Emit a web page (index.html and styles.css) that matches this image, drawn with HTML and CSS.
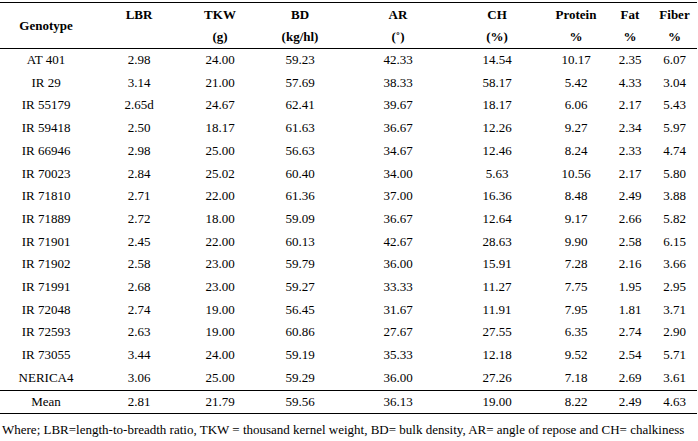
FILE: index.html
```html
<!DOCTYPE html>
<html>
<head>
<meta charset="utf-8">
<link rel="stylesheet" href="styles.css">
</head>
<body>
<table class="data">
<colgroup>
<col class="c0"><col class="c1"><col class="c2"><col class="c3"><col class="c4"><col class="c5"><col class="c6"><col class="c7"><col class="c8">
</colgroup>
<thead>
<tr>
<th>Genotype</th>
<th><span class="l">LBR</span><span class="l">&nbsp;</span></th>
<th><span class="l">TKW</span><span class="l">(g)</span></th>
<th><span class="l">BD</span><span class="l">(kg/hl)</span></th>
<th><span class="l">AR</span><span class="l">(˚)</span></th>
<th><span class="l">CH</span><span class="l">(%)</span></th>
<th><span class="l">Protein</span><span class="l">%</span></th>
<th><span class="l">Fat</span><span class="l">%</span></th>
<th><span class="l">Fiber</span><span class="l">%</span></th>
</tr>
</thead>
<tbody>
<tr><td>AT 401</td><td>2.98</td><td>24.00</td><td>59.23</td><td>42.33</td><td>14.54</td><td>10.17</td><td>2.35</td><td>6.07</td></tr>
<tr><td>IR 29</td><td>3.14</td><td>21.00</td><td>57.69</td><td>38.33</td><td>58.17</td><td>5.42</td><td>4.33</td><td>3.04</td></tr>
<tr><td>IR 55179</td><td>2.65d</td><td>24.67</td><td>62.41</td><td>39.67</td><td>18.17</td><td>6.06</td><td>2.17</td><td>5.43</td></tr>
<tr><td>IR 59418</td><td>2.50</td><td>18.17</td><td>61.63</td><td>36.67</td><td>12.26</td><td>9.27</td><td>2.34</td><td>5.97</td></tr>
<tr><td>IR 66946</td><td>2.98</td><td>25.00</td><td>56.63</td><td>34.67</td><td>12.46</td><td>8.24</td><td>2.33</td><td>4.74</td></tr>
<tr><td>IR 70023</td><td>2.84</td><td>25.02</td><td>60.40</td><td>34.00</td><td>5.63</td><td>10.56</td><td>2.17</td><td>5.80</td></tr>
<tr><td>IR 71810</td><td>2.71</td><td>22.00</td><td>61.36</td><td>37.00</td><td>16.36</td><td>8.48</td><td>2.49</td><td>3.88</td></tr>
<tr><td>IR 71889</td><td>2.72</td><td>18.00</td><td>59.09</td><td>36.67</td><td>12.64</td><td>9.17</td><td>2.66</td><td>5.82</td></tr>
<tr><td>IR 71901</td><td>2.45</td><td>22.00</td><td>60.13</td><td>42.67</td><td>28.63</td><td>9.90</td><td>2.58</td><td>6.15</td></tr>
<tr><td>IR 71902</td><td>2.58</td><td>23.00</td><td>59.79</td><td>36.00</td><td>15.91</td><td>7.28</td><td>2.16</td><td>3.66</td></tr>
<tr><td>IR 71991</td><td>2.68</td><td>23.00</td><td>59.27</td><td>33.33</td><td>11.27</td><td>7.75</td><td>1.95</td><td>2.95</td></tr>
<tr><td>IR 72048</td><td>2.74</td><td>19.00</td><td>56.45</td><td>31.67</td><td>11.91</td><td>7.95</td><td>1.81</td><td>3.71</td></tr>
<tr><td>IR 72593</td><td>2.63</td><td>19.00</td><td>60.86</td><td>27.67</td><td>27.55</td><td>6.35</td><td>2.74</td><td>2.90</td></tr>
<tr><td>IR 73055</td><td>3.44</td><td>24.00</td><td>59.19</td><td>35.33</td><td>12.18</td><td>9.52</td><td>2.54</td><td>5.71</td></tr>
<tr><td>NERICA4</td><td>3.06</td><td>25.00</td><td>59.29</td><td>36.00</td><td>27.26</td><td>7.18</td><td>2.69</td><td>3.61</td></tr>
</tbody>
<tfoot>
<tr><td>Mean</td><td>2.81</td><td>21.79</td><td>59.56</td><td>36.13</td><td>19.00</td><td>8.22</td><td>2.49</td><td>4.63</td></tr>
</tfoot>
</table>
<p class="note">Where; LBR=length-to-breadth ratio, TKW = thousand kernel weight, BD= bulk density, AR= angle of repose and CH= chalkiness</p>
</body>
</html>
```

FILE: styles.css
```css
html, body {
  margin: 0;
  padding: 0;
  background: #fff;
}
body {
  font-family: "Liberation Serif", "Times New Roman", serif;
  font-size: 13px;
  color: #000;
  width: 698px;
}
.data {
  border-collapse: collapse;
  table-layout: fixed;
  width: 697px;
  margin-top: 2px;
}
.c0 { width: 92px; }
.c1 { width: 94px; }
.c2 { width: 68px; }
.c3 { width: 92px; }
.c4 { width: 104px; }
.c5 { width: 94px; }
.c6 { width: 64px; }
.c7 { width: 44px; }
.c8 { width: 45px; }
.data thead tr {
  border-top: 1px solid #000;
  border-bottom: 1px solid #000;
}
.data th {
  font-weight: bold;
  text-align: center;
  vertical-align: middle;
  padding: 0;
  height: 45px;
}
.data th .l {
  display: block;
  line-height: 22px;
}
.data td {
  text-align: center;
  padding: 0;
  line-height: 22.7px;
  white-space: nowrap;
}
.data tfoot tr {
  border-top: 1px solid #000;
  border-bottom: 1px solid #000;
}
.data tfoot td {
  line-height: 22px;
}
.note {
  margin: 7px 0 0 2px;
  line-height: 18px;
  white-space: nowrap;
}
```
